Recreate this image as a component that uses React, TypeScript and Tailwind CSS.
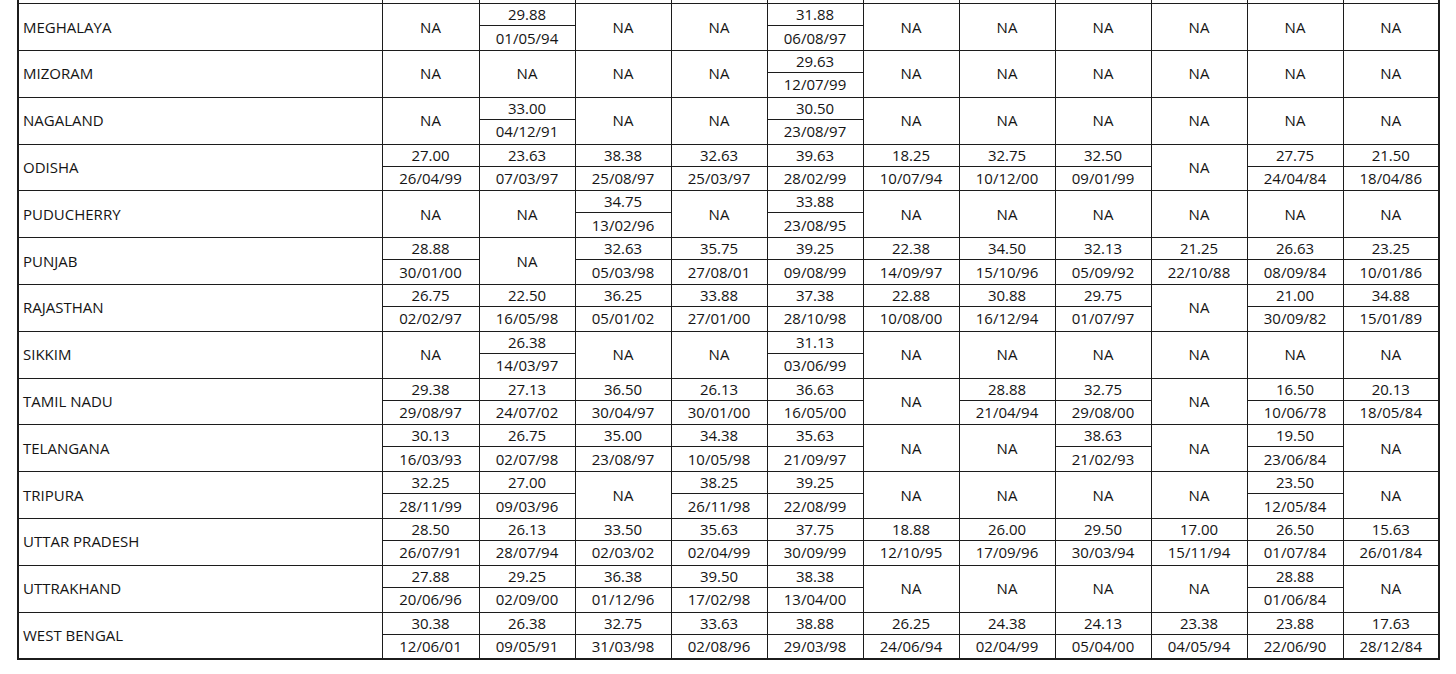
import React from "react";

type Cell = "NA" | "" | [string, string];

const N: Cell = "NA";
const E: Cell = "";

const rows: { name: string; cells: Cell[] }[] = [
  {
    name: "",
    cells: [E, E, E, E, ["", "(01/05/98)"], E, E, E, E, ["", "(01/05/84)"], E],
  },
  {
    name: "MEGHALAYA",
    cells: [N, ["29.88", "01/05/94"], N, N, ["31.88", "06/08/97"], N, N, N, N, N, N],
  },
  {
    name: "MIZORAM",
    cells: [N, N, N, N, ["29.63", "12/07/99"], N, N, N, N, N, N],
  },
  {
    name: "NAGALAND",
    cells: [N, ["33.00", "04/12/91"], N, N, ["30.50", "23/08/97"], N, N, N, N, N, N],
  },
  {
    name: "ODISHA",
    cells: [
      ["27.00", "26/04/99"],
      ["23.63", "07/03/97"],
      ["38.38", "25/08/97"],
      ["32.63", "25/03/97"],
      ["39.63", "28/02/99"],
      ["18.25", "10/07/94"],
      ["32.75", "10/12/00"],
      ["32.50", "09/01/99"],
      N,
      ["27.75", "24/04/84"],
      ["21.50", "18/04/86"],
    ],
  },
  {
    name: "PUDUCHERRY",
    cells: [N, N, ["34.75", "13/02/96"], N, ["33.88", "23/08/95"], N, N, N, N, N, N],
  },
  {
    name: "PUNJAB",
    cells: [
      ["28.88", "30/01/00"],
      N,
      ["32.63", "05/03/98"],
      ["35.75", "27/08/01"],
      ["39.25", "09/08/99"],
      ["22.38", "14/09/97"],
      ["34.50", "15/10/96"],
      ["32.13", "05/09/92"],
      ["21.25", "22/10/88"],
      ["26.63", "08/09/84"],
      ["23.25", "10/01/86"],
    ],
  },
  {
    name: "RAJASTHAN",
    cells: [
      ["26.75", "02/02/97"],
      ["22.50", "16/05/98"],
      ["36.25", "05/01/02"],
      ["33.88", "27/01/00"],
      ["37.38", "28/10/98"],
      ["22.88", "10/08/00"],
      ["30.88", "16/12/94"],
      ["29.75", "01/07/97"],
      N,
      ["21.00", "30/09/82"],
      ["34.88", "15/01/89"],
    ],
  },
  {
    name: "SIKKIM",
    cells: [N, ["26.38", "14/03/97"], N, N, ["31.13", "03/06/99"], N, N, N, N, N, N],
  },
  {
    name: "TAMIL NADU",
    cells: [
      ["29.38", "29/08/97"],
      ["27.13", "24/07/02"],
      ["36.50", "30/04/97"],
      ["26.13", "30/01/00"],
      ["36.63", "16/05/00"],
      N,
      ["28.88", "21/04/94"],
      ["32.75", "29/08/00"],
      N,
      ["16.50", "10/06/78"],
      ["20.13", "18/05/84"],
    ],
  },
  {
    name: "TELANGANA",
    cells: [
      ["30.13", "16/03/93"],
      ["26.75", "02/07/98"],
      ["35.00", "23/08/97"],
      ["34.38", "10/05/98"],
      ["35.63", "21/09/97"],
      N,
      N,
      ["38.63", "21/02/93"],
      N,
      ["19.50", "23/06/84"],
      N,
    ],
  },
  {
    name: "TRIPURA",
    cells: [
      ["32.25", "28/11/99"],
      ["27.00", "09/03/96"],
      N,
      ["38.25", "26/11/98"],
      ["39.25", "22/08/99"],
      N,
      N,
      N,
      N,
      ["23.50", "12/05/84"],
      N,
    ],
  },
  {
    name: "UTTAR PRADESH",
    cells: [
      ["28.50", "26/07/91"],
      ["26.13", "28/07/94"],
      ["33.50", "02/03/02"],
      ["35.63", "02/04/99"],
      ["37.75", "30/09/99"],
      ["18.88", "12/10/95"],
      ["26.00", "17/09/96"],
      ["29.50", "30/03/94"],
      ["17.00", "15/11/94"],
      ["26.50", "01/07/84"],
      ["15.63", "26/01/84"],
    ],
  },
  {
    name: "UTTRAKHAND",
    cells: [
      ["27.88", "20/06/96"],
      ["29.25", "02/09/00"],
      ["36.38", "01/12/96"],
      ["39.50", "17/02/98"],
      ["38.38", "13/04/00"],
      N,
      N,
      N,
      N,
      ["28.88", "01/06/84"],
      N,
    ],
  },
  {
    name: "WEST BENGAL",
    cells: [
      ["30.38", "12/06/01"],
      ["26.38", "09/05/91"],
      ["32.75", "31/03/98"],
      ["33.63", "02/08/96"],
      ["38.88", "29/03/98"],
      ["26.25", "24/06/94"],
      ["24.38", "02/04/99"],
      ["24.13", "05/04/00"],
      ["23.38", "04/05/94"],
      ["23.88", "22/06/90"],
      ["17.63", "28/12/84"],
    ],
  },
];

const bd = "border border-[#1c1c1c]";

export default function App() {
  return (
    <div
      className="w-[1456px] h-[674px] overflow-hidden bg-white text-[#141414]"
      style={{ fontFamily: '"Open Sans", "Liberation Sans", sans-serif' }}
    >
      <table className="ml-[17px] -mt-[44px] border-collapse table-fixed text-[15px] leading-none font-medium border-2 border-[#1c1c1c]">
        <colgroup>
          <col className="w-[364px]" />
          <col className="w-[97px]" />
          {Array.from({ length: 10 }).map((_, i) => (
            <col key={i} className="w-[96px]" />
          ))}
        </colgroup>
        <tbody>
          {rows.map((r, ri) => (
            <React.Fragment key={ri}>
              <tr className="h-[22px]">
                <td rowSpan={2} className={`${bd} pl-[4px] text-left align-middle`}>
                  {r.name}
                </td>
                {r.cells.map((c, i) =>
                  typeof c === "string" ? (
                    <td key={i} rowSpan={2} className={`${bd} text-center align-middle`}>
                      {c}
                    </td>
                  ) : (
                    <td key={i} className={`${bd} text-center align-middle`}>
                      {c[0]}
                    </td>
                  )
                )}
              </tr>
              <tr className="h-[24.8px]">
                {r.cells.map((c, i) =>
                  typeof c === "string" ? null : (
                    <td key={i} className={`${bd} text-center align-middle`}>
                      {c[1]}
                    </td>
                  )
                )}
              </tr>
            </React.Fragment>
          ))}
        </tbody>
      </table>
    </div>
  );
}
